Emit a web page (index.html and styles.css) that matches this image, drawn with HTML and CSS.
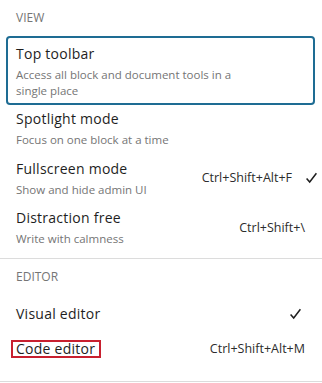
FILE: index.html
```html
<!DOCTYPE html>
<html lang="en">
<head>
<meta charset="utf-8">
<title>View menu</title>
<link rel="stylesheet" href="styles.css">
</head>
<body>
<div class="menu">
  <div class="group group-view">
    <div class="label">View</div>
    <div class="item is-selected">
      <div class="text">
        <div class="title">Top toolbar</div>
        <div class="desc">Access all block and document tools in a single place</div>
      </div>
    </div>
    <div class="item">
      <div class="text">
        <div class="title">Spotlight mode</div>
        <div class="desc">Focus on one block at a time</div>
      </div>
    </div>
    <div class="item">
      <div class="text">
        <div class="title">Fullscreen mode</div>
        <div class="desc">Show and hide admin UI</div>
      </div>
      <span class="shortcut">Ctrl+Shift+Alt+F</span>
      <svg class="check check-after" width="11" height="12" viewBox="0 0 11 12" aria-hidden="true"><polyline points="0.6,6.4 3.7,10 10.4,1.2" /></svg>
    </div>
    <div class="item">
      <div class="text">
        <div class="title">Distraction free</div>
        <div class="desc">Write with calmness</div>
      </div>
      <span class="shortcut">Ctrl+Shift+\</span>
    </div>
  </div>
  <div class="group group-editor">
    <div class="label">Editor</div>
    <div class="item item-single">
      <div class="text">
        <div class="title">Visual editor</div>
      </div>
      <svg class="check" width="11" height="12" viewBox="0 0 11 12" aria-hidden="true"><polyline points="0.6,6.4 3.7,10 10.4,1.2" /></svg>
    </div>
    <div class="item item-single">
      <div class="text">
        <div class="title"><span class="highlight">Code editor</span></div>
      </div>
      <span class="shortcut">Ctrl+Shift+Alt+M</span>
    </div>
  </div>
</div>
</body>
</html>
```
FILE: styles.css
```css
html, body {
  margin: 0;
  padding: 0;
  background: #ffffff;
}

body {
  font-family: "Open Sans", "Noto Sans", sans-serif;
  color: #1e1e1e;
  width: 322px;
}

.menu {
  display: flex;
  flex-direction: column;
}

.group {
  display: flex;
  flex-direction: column;
  padding: 10px 9px 13.5px 8px;
}

.group-view {
  padding-top: 10px;
  padding-bottom: 6px;
}

.group + .group {
  border-top: 1px solid #dcdcdc;
}

.group:last-child {
  border-bottom: 1px solid #dcdcdc;
}

.label {
  font-size: 12px;
  line-height: 16px;
  text-transform: uppercase;
  color: #757575;
  padding-left: 8px;
  margin-bottom: 11.5px;
}

.item {
  display: flex;
  align-items: center;
  padding: 6px 8px 4.5px 8px;
  border-radius: 2px;
}

.item.is-selected {
  box-shadow: 0 0 0 2px #1e6c93;
}

.item-single {
  padding-top: 7.8px;
  padding-bottom: 7.8px;
}

.text {
  flex: 1;
  min-width: 0;
}

.title {
  font-size: 14px;
  line-height: 20px;
  letter-spacing: 0.25px;
  color: #1e1e1e;
}

.desc {
  font-size: 11.5px;
  line-height: 16px;
  color: #757575;
  margin-top: 3px;
  max-width: 230px;
}

.shortcut {
  font-size: 12.5px;
  line-height: 16px;
  color: #2c2c2c;
  white-space: nowrap;
}

.check {
  flex: none;
  fill: none;
  stroke: #1e1e1e;
  stroke-width: 1.5;
  margin-right: 4px;
}

.check-after {
  margin-left: 14px;
  margin-right: -12px;
}

.highlight {
  display: inline-block;
  line-height: 14px;
  padding: 0 4px 0 3px;
  margin-left: -5px;
  border: 2px solid #c8202f;
}
```
